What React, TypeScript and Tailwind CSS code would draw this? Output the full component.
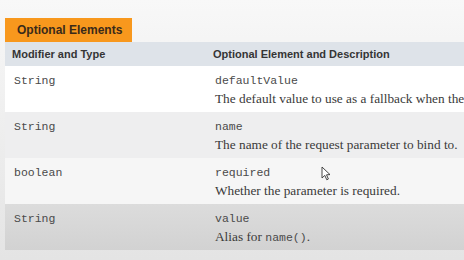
import React from 'react';

const rows = [
  { type: 'String', name: 'defaultValue', desc: <>The default value to use as a fallback when the request parameter is not provided</>, bg: 'bg-white' },
  { type: 'String', name: 'name', desc: <>The name of the request parameter to bind to.</>, bg: 'bg-[#eeeeef]' },
  { type: 'boolean', name: 'required', desc: <>Whether the parameter is required.</>, bg: 'bg-[#f6f6f6]' },
  {
    type: 'String',
    name: 'value',
    desc: (
      <>
        Alias for{' '}
        <span className="font-['Liberation_Mono',monospace] text-[11.5px] text-[#4a4a4a]">name()</span>.
      </>
    ),
    bg: 'bg-gradient-to-b from-[#dcdcdc] to-[#d2d2d2]',
  },
];

export default function App() {
  return (
    <div className="relative w-[464px] h-[260px] overflow-hidden bg-gradient-to-b from-[#f8f8f8] to-[#e4e4e4] pl-[5px] pt-[18px]">
      {/* tab */}
      <div className="w-[127px] h-[24px] bg-[#f8981d] flex items-center pl-[12px] font-['Liberation_Sans',Arial,sans-serif] font-bold text-[12px] text-[#3a2a1a]">
        Optional Elements
      </div>

      <div className="w-[470px] font-['Liberation_Sans',Arial,sans-serif]">
        {/* header */}
        <div className="flex h-[24px] items-center bg-[#dee3e9] text-[11px] font-bold text-[#353535]">
          <div className="w-[208px] shrink-0 pl-[7px]">Modifier and Type</div>
          <div className="flex-1 min-w-0">Optional Element and Description</div>
        </div>

        {rows.map((r, i) => (
          <div key={i} className={`flex h-[46px] pt-[6px] ${r.bg}`}>
            <div className="w-[208px] shrink-0 pl-[9px] h-[18px] flex items-center font-['Liberation_Mono',monospace] text-[11.5px] text-[#4a4a4a]">
              {r.type}
            </div>
            <div className="flex-1 min-w-0 pl-[2px]">
              <div className="h-[18px] flex items-center font-['Liberation_Mono',monospace] text-[11.5px] text-[#4a4a4a]">
                {r.name}
              </div>
              <div className="h-[18px] flex items-center whitespace-nowrap font-['Liberation_Serif','Times_New_Roman',serif] text-[13.3px] text-[#3a3a3a]">
                <span>{r.desc}</span>
              </div>
            </div>
          </div>
        ))}
      </div>

      {/* mouse pointer */}
      <svg className="absolute left-[321px] top-[166px]" width="10" height="15" viewBox="0 0 10 15">
        <path d="M1 1 L1 12 L3.8 9.4 L5.8 13.8 L7.4 13 L5.5 8.8 L9 8.6 Z" fill="#ffffff" stroke="#333" strokeWidth="0.9" strokeLinejoin="round" />
      </svg>
    </div>
  );
}
